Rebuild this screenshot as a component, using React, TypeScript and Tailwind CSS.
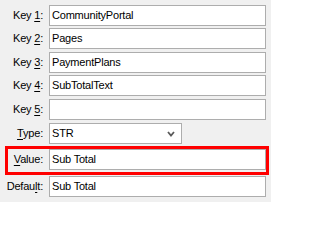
import React from "react";

const FONT = { fontFamily: '"Liberation Sans", Arial, sans-serif' };

// label with one underlined access key
function Label({ before, mark, after, w = "w-[43px]" }: { before: string; mark: string; after: string; w?: string }) {
  return (
    <div className={`${w} shrink-0 text-right text-black whitespace-nowrap`}>
      {before}
      <span className="underline underline-offset-[2px]">{mark}</span>
      {after}
    </div>
  );
}

function Field({ value }: { value: string }) {
  return (
    <div className="ml-[6px] w-[217px] h-[21px] shrink-0 border border-[#adadad] bg-white pl-[2px] flex items-center text-black">
      {value}
    </div>
  );
}

export default function App() {
  const keys = [
    { n: "1", v: "CommunityPortal", mt: "mt-0" },
    { n: "2", v: "Pages", mt: "mt-[2px]" },
    { n: "3", v: "PaymentPlans", mt: "mt-[3px]" },
    { n: "4", v: "SubTotalText", mt: "mt-[2px]" },
    { n: "5", v: "", mt: "mt-[3px]" },
  ];

  return (
    <div
      className="w-[271px] h-[202px] bg-[#f0f0f0] pt-[5px] text-[11px] tracking-[-0.2px] overflow-hidden"
      style={FONT}
    >
      {keys.map((k) => (
        <div key={k.n} className={`flex items-center h-[21px] ${k.mt}`}>
          <Label before="Key " mark={k.n} after=":" />
          <Field value={k.v} />
        </div>
      ))}

      {/* Type select */}
      <div className="flex items-center h-[21px] mt-[3px]">
        <Label before="" mark="T" after="ype:" />
        <div className="ml-[6px] w-[133px] h-[21px] border border-[#adadad] bg-white pl-[2px] pr-[6px] flex items-center justify-between text-black">
          <span>STR</span>
          <svg width="8" height="6" viewBox="0 0 8 6">
            <polyline points="1,1 4,4.5 7,1" fill="none" stroke="#5a5a5a" strokeWidth="1.8" />
          </svg>
        </div>
      </div>

      {/* highlighted Value row */}
      <div className="mt-[2px] ml-[5px] w-[264px] border-[3px] border-[#ff0000] pb-[2px]">
        <div className="flex items-center h-[21px]">
          <Label before="" mark="V" after="alue:" w="w-[35px]" />
          <Field value="Sub Total" />
        </div>
      </div>

      <div className="flex items-center h-[21px] mt-[1px]">
        <Label before="Defau" mark="l" after="t:" />
        <Field value="Sub Total" />
      </div>
    </div>
  );
}
